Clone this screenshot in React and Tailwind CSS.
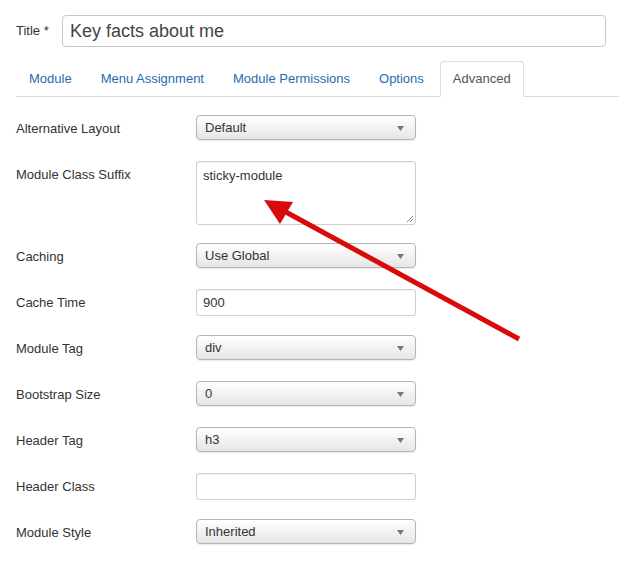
import React from "react";

const font = { fontFamily: '"Liberation Sans", Arial, Helvetica, sans-serif' };

function Select({ value }) {
  return (
    <div className="relative w-[220px] h-[25px] rounded-[4px] border border-[#b5b5b5] bg-gradient-to-b from-white to-[#e6e6e6] shadow-[0_1px_1px_rgba(0,0,0,0.08)] flex items-center pl-[8px] text-[13px] text-[#333]">
      <span>{value}</span>
      <svg className="absolute right-[11px] top-[10px]" width="7" height="5" viewBox="0 0 7 5">
        <polygon points="0,0 7,0 3.5,5" fill="#777" />
      </svg>
    </div>
  );
}

function Input({ value }) {
  return (
    <div className="w-[220px] h-[27px] rounded-[3px] border border-[#cfcfcf] bg-white flex items-center pl-[6px] text-[13px] text-[#333] shadow-[inset_0_1px_1px_rgba(0,0,0,0.06)]">
      {value}
    </div>
  );
}

function Textarea({ value }) {
  return (
    <div className="relative w-[220px] h-[64px] rounded-[3px] border border-[#cfcfcf] bg-white pl-[6px] pt-[4px] text-[13px] text-[#333] shadow-[inset_0_1px_1px_rgba(0,0,0,0.06)]">
      {value}
      <svg className="absolute right-[1px] bottom-[1px]" width="8" height="8" viewBox="0 0 8 8">
        <line x1="1" y1="7" x2="7" y2="1" stroke="#888" strokeWidth="1" />
        <line x1="4" y1="7" x2="7" y2="4" stroke="#888" strokeWidth="1" />
      </svg>
    </div>
  );
}

function Row({ label, children, tall, labelPt = "pt-[4px]" }) {
  return (
    <div className={`flex items-start ${tall ? "h-[82px]" : "h-[46px]"}`}>
      <div className={`w-[180px] text-[13px] text-[#333] ${labelPt}`}>{label}</div>
      {children}
    </div>
  );
}

export default function App() {
  const tabs = ["Module", "Menu Assignment", "Module Permissions", "Options"];
  return (
    <div className="relative w-[619px] h-[584px] bg-white overflow-hidden" style={font}>
      <div className="pl-[16px] pt-[15px]">
        <div className="flex items-center pr-[13px]">
          <div className="w-[46px] text-[13px] text-[#333]">Title *</div>
          <div className="flex-1 h-[32px] rounded-[4px] border border-[#c8c8c8] bg-white flex items-center pl-[7px] text-[18px] text-[#444]">
            Key facts about me
          </div>
        </div>

        <div className="mt-[14px] flex border-b border-[#dddddd] h-[36px]">
          {tabs.map((t) => (
            <div key={t} className="mr-[3px] h-[35px] px-[13px] flex items-center text-[13px] text-[#2a6bb0]">
              {t}
            </div>
          ))}
          <div className="h-[36px] px-[12px] flex items-center text-[13px] text-[#555] bg-white border border-[#dddddd] border-b-white rounded-t-[4px]">
            Advanced
          </div>
        </div>

        <div className="mt-[18px] flex flex-col">
          <Row label="Alternative Layout"><Select value="Default" /></Row>
          <Row label="Module Class Suffix" tall><Textarea value="sticky-module" /></Row>
          <Row label="Caching"><Select value="Use Global" /></Row>
          <Row label="Cache Time"><Input value="900" /></Row>
          <Row label="Module Tag"><Select value="div" /></Row>
          <Row label="Bootstrap Size"><Select value="0" /></Row>
          <Row label="Header Tag"><Select value="h3" /></Row>
          <Row label="Header Class"><Input value="" /></Row>
          <Row label="Module Style"><Select value="Inherited" /></Row>
        </div>
      </div>

      <svg className="absolute left-0 top-0 pointer-events-none" width="619" height="584" viewBox="0 0 619 584">
        <line x1="519" y1="339" x2="284" y2="211" stroke="#d80a0a" strokeWidth="5" />
        <polygon points="264,200 293,202 280,224" fill="#d80a0a" />
      </svg>
    </div>
  );
}
